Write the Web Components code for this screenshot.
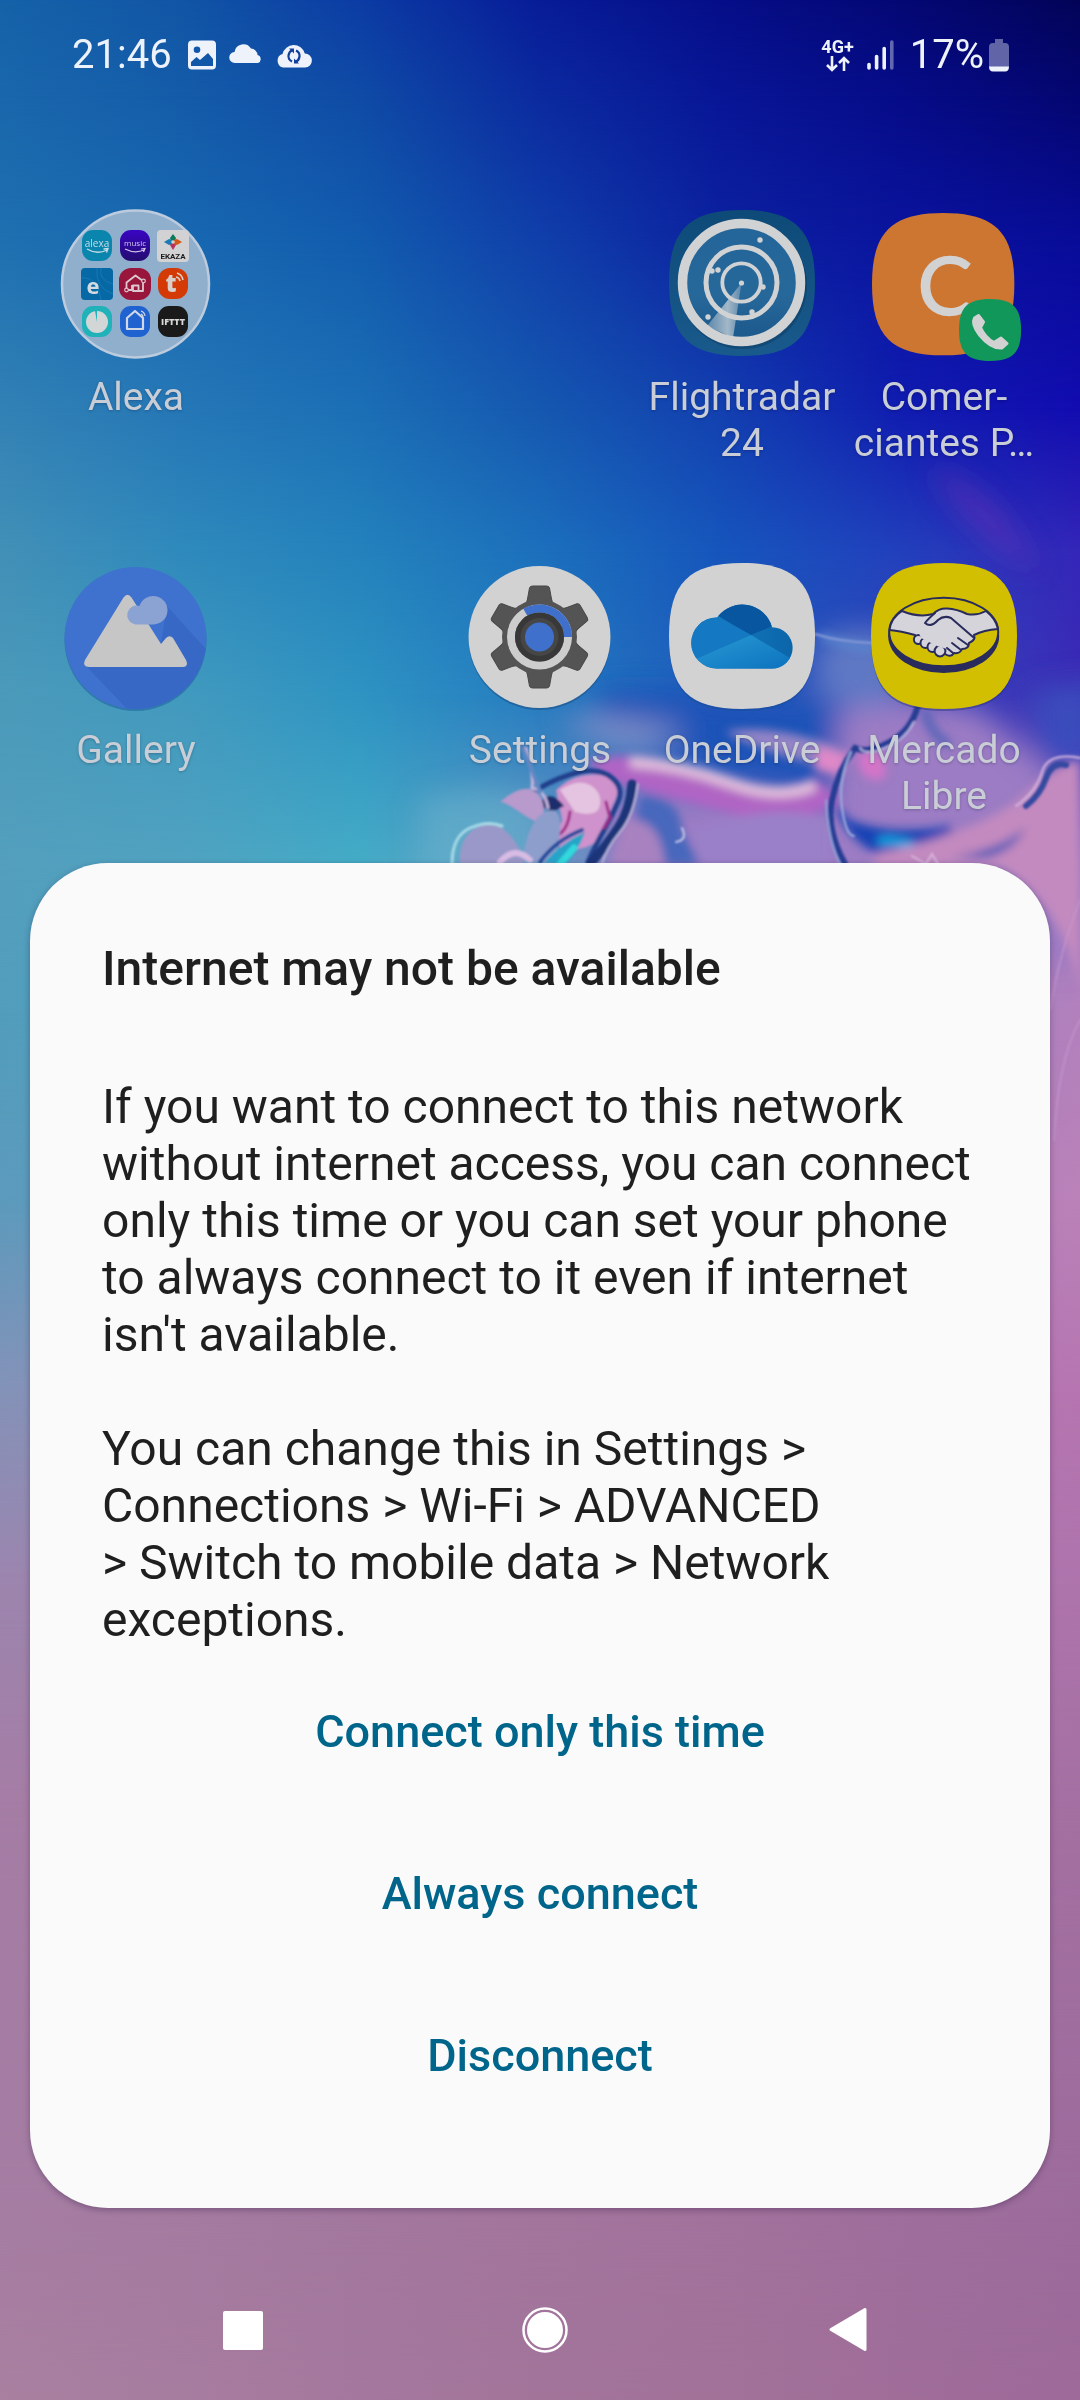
<!DOCTYPE html>
<html lang="en">
<head>
<meta charset="utf-8">
<meta name="viewport" content="width=device-width, initial-scale=1">
<title>Home screen</title>
<style>
  html, body { margin: 0; }
  body { font-family: Roboto, "Noto Sans", sans-serif; background: #a2739c; }
  svg text { user-select: none; }
</style>
</head>
<body>
<home-screen>
  <wall-paper slot="background"></wall-paper>
  <status-bar time="21:46" battery="17%" network="4G+"></status-bar>

  <app-grid>
    <app-tile column="1">
      <svg slot="icon" viewBox="0 0 146 146" aria-hidden="true">
        <defs>
          <linearGradient id="music" x1="0" y1="0" x2="0" y2="1"><stop offset="0" stop-color="#3a04c4"/><stop offset="1" stop-color="#240c70"/></linearGradient>
        </defs>
        <circle cx="72.500" cy="74" r="73.500" fill="#8fafcd" stroke="#bccbdd" stroke-width="2.500"/>
        <rect x="19" y="20" width="30" height="31" rx="11" fill="#0a86ae"/>
        <text x="34" y="37" font-family="Open Sans" font-size="10" fill="#c8dce6" text-anchor="middle">alexa</text>
        <path d="M24 39q10 6 20 1m-3.500-1l4.500-.5-1.500 4" fill="none" stroke="#c8dce6" stroke-width="1.300"/>
        <rect x="57" y="20" width="30" height="31" rx="11" fill="url(#music)"/>
        <text x="72" y="36" font-family="Open Sans" font-size="8" fill="#d0c8e8" text-anchor="middle">music</text>
        <path d="M62 39q10 5 19 1m-3-1l4-.5-1.500 3.500" fill="none" stroke="#d0c8e8" stroke-width="1.200"/>
        <rect x="94" y="20" width="32" height="32" rx="4" fill="#d2d2d4"/>
        <path d="M107 28l3-4 3 4-1 3h-4z" fill="#0a7a58"/>
        <path d="M107 35l3 5 3-5-1-3h-4z" fill="#b8305c"/>
        <path d="M106 29l-5 3 5 3 3-1v-4z" fill="#1c7ab4"/>
        <path d="M114 29l5 3-5 3-3-1v-4z" fill="#d4581c"/>
        <circle cx="110" cy="32" r="1.800" fill="#d2d2d4"/>
        <text x="110" y="49" font-family="Roboto" font-weight="700" font-size="8" fill="#1b1b1d" text-anchor="middle">EKAZA</text>
        <rect x="18" y="58" width="32" height="32" rx="4" fill="#0669a6"/>
        <path d="M38 58q-3 12 12 16M18 68q16-2 20 22M34 58q-2 20 16 26" fill="none" stroke="#1c80b8" stroke-width=".7"/>
        <text x="30" y="84" font-family="Open Sans" font-weight="700" font-size="22" fill="#d3dbe0" text-anchor="middle">e</text>
        <rect x="56" y="58" width="32" height="32" rx="12" fill="#98153c"/>
        <path d="M65 80H69V75M63.500 78V72.500L72.500 65.500 80 71V81H75.500V75.500H70V81H75" fill="none" stroke="#dcc8d0" stroke-width="1.800" stroke-linejoin="round"/>
        <circle cx="63.500" cy="80" r="1.800" fill="#98153c" stroke="#dcc8d0" stroke-width="1.200"/><circle cx="80.500" cy="71" r="1.800" fill="#98153c" stroke="#dcc8d0" stroke-width="1.200"/>
        <rect x="95" y="58" width="30" height="31" rx="12" fill="#d33a05"/>
        <text x="108" y="82" font-family="Open Sans" font-weight="800" font-size="24" fill="#d8cfcb" text-anchor="middle">t</text>
        <path d="M113 67a5 5 0 0 1 4 4M114 63a9 9 0 0 1 6 7" fill="none" stroke="#d8cfcb" stroke-width="1.600"/>
        <rect x="19" y="96" width="30" height="31" rx="11" fill="#20b2b9"/>
        <circle cx="34" cy="112" r="11" fill="#d2d6d6"/><path d="M32 101l2 11v-11z" fill="#20b2b9"/>
        <rect x="57" y="96" width="30" height="31" rx="11" fill="#1f62d0"/>
        <path d="M64 119v-11l8-7 8 7v11z" fill="none" stroke="#d0d8e4" stroke-width="2.200" stroke-linejoin="round"/>
        <path d="M78 104a3 3 0 0 1 2 3M78 101a6 6 0 0 1 4 5" fill="none" stroke="#d0d8e4" stroke-width="1.200"/>
        <rect x="95" y="96" width="30" height="31" rx="11" fill="#1a1a1a"/>
        <text x="110" y="115" font-family="Open Sans" font-weight="800" font-size="9" fill="#d8d8d8" text-anchor="middle">IFTTT</text>
      </svg>
      Alexa
    </app-tile>

    <app-tile column="4">
      <svg slot="icon" viewBox="0 0 146 146" aria-hidden="true">
        <defs>
          <linearGradient id="radar" x1="0" y1="0" x2="0" y2="1"><stop offset="0" stop-color="#24659a"/><stop offset=".6" stop-color="#27689a"/><stop offset="1" stop-color="#1b578a"/></linearGradient>
          <linearGradient id="tile" x1="0" y1="0" x2="0" y2="1"><stop offset="0" stop-color="#0d4a78"/><stop offset="1" stop-color="#195a8c"/></linearGradient>
          <linearGradient id="beam" x1="0" y1="0" x2="1" y2="0"><stop offset="0" stop-color="#5c87ab"/><stop offset=".6" stop-color="#a3b8c8"/><stop offset="1" stop-color="#5c87ab"/></linearGradient>
        </defs>
        <path d="M0 73C0 20 20 0 73 0S146 20 146 73 126 146 73 146 0 126 0 73Z" fill="url(#tile)"/>
        <circle cx="74" cy="75" r="64" fill="#0a2d50" opacity=".35"/>
        <circle cx="72.500" cy="72.500" r="59" fill="url(#radar)"/>
        <path d="M72.500 73L38 116 64 128Z" fill="url(#beam)"/>
        <g fill="none" stroke="#d0d2d4">
          <circle cx="72.500" cy="72.500" r="59" stroke-width="9.500"/>
          <circle cx="72.500" cy="72.500" r="35.500" stroke-width="5"/>
          <circle cx="72.500" cy="72.500" r="19.200" stroke-width="3.800"/>
        </g>
        <g fill="#d0d2d4">
          <circle cx="72.500" cy="73" r="2.600"/><circle cx="91" cy="30" r="2.700"/><circle cx="49" cy="60" r="2.700"/><circle cx="43" cy="61" r="2.700"/>
          <circle cx="94" cy="77" r="2.700"/><circle cx="83" cy="102" r="2.700"/><circle cx="39" cy="107" r="2.700"/>
        </g>
      </svg>
      Flightradar<br>24
    </app-tile>

    <app-tile column="5">
      <svg slot="icon" viewBox="0 0 146 146" aria-hidden="true">
        <path transform="translate(1 3) scale(.975)" d="M0 73C0 20 20 0 73 0S146 20 146 73 126 146 73 146 0 126 0 73Z" fill="#cd7632"/>
        <text x="74" y="105" font-family="Lato" font-size="82" fill="#d2d2d2" stroke="#d2d2d2" stroke-width="1.500" text-anchor="middle">C</text>
        <path transform="translate(88 89) scale(.425)" d="M0 73C0 20 20 0 73 0S146 20 146 73 126 146 73 146 0 126 0 73Z" fill="#12975a"/>
        <path d="M107.500 105.500L112.500 112 109.500 117.500Q114 127.500 123 132.500L130 128 136 133.500 131 138Q120 139 108.500 125 100 114 103.500 108Z" fill="#d2d2d2" stroke="#d2d2d2" stroke-width="3" stroke-linejoin="round"/>
      </svg>
      Comer-<br>ciantes P…
    </app-tile>

    <app-tile column="1">
      <svg slot="icon" viewBox="0 0 146 146" aria-hidden="true">
        <defs><clipPath id="disc"><circle cx="72.500" cy="75" r="71"/></clipPath></defs>
        <circle cx="72.500" cy="77" r="71" fill="#1a5a9c" opacity=".5"/>
        <circle cx="72.500" cy="75" r="71" fill="#3f72ce"/>
        <path clip-path="url(#disc)" d="M23 103L66 148 150 148 150 94 104 43 98 80 122 103Z" fill="#3768c6"/>
        <path d="M60.500 34.500q4-5.500 8 0L98 81l5-6q3.500-3.500 7 0l13 22q3 6.500-3 7H26q-7-.5-4-7z" fill="#c6c6c6"/>
        <path d="M72.500 61.500a9.500 9.500 0 1 1 4-18.500 14.300 14.300 0 1 1 14 18.500z" fill="#8ba3d2"/>
      </svg>
      Gallery
    </app-tile>

    <app-tile column="3">
      <svg slot="icon" viewBox="0 0 146 146" aria-hidden="true">
        <circle cx="72.500" cy="76" r="71" fill="#1a4c80" opacity=".5"/>
        <circle cx="72.500" cy="74" r="71" fill="#d2d2d2"/>
        <g transform="translate(72.500 74)">
          <g fill="#545454" stroke="#484848" stroke-width="1">
            <path id="tooth" d="M-19-30q6-2 7-8l2-11q.5-2 3-2H7q2.500 0 3 2l2 11q1 6 7 8z"/>
            <use href="#tooth" transform="rotate(60)"/><use href="#tooth" transform="rotate(120)"/><use href="#tooth" transform="rotate(180)"/><use href="#tooth" transform="rotate(240)"/><use href="#tooth" transform="rotate(300)"/>
          </g>
          <circle r="37.500" fill="#545454"/>
          <circle r="28.500" fill="none" stroke="#cdcdcd" stroke-width="8"/>
          <path d="M-14.200-24.700A28.500 28.500 0 0 1 28.500 0" fill="none" stroke="#3f70cc" stroke-width="8"/>
          <circle r="24.500" fill="#383838"/><circle r="19" fill="#464646"/>
          <circle r="14.500" fill="#3f70cc"/>
        </g>
      </svg>
      Settings
    </app-tile>

    <app-tile column="4">
      <svg slot="icon" viewBox="0 0 146 146" aria-hidden="true">
        <defs>
          <clipPath id="cloud"><path d="M47.500 105.500A25.500 25.500 0 1 1 48 54.500 31 31 0 0 1 103 64.200 20.500 20.500 0 1 1 103 105.500Z"/></clipPath>
          <linearGradient id="cloudBase" x1="0" y1="0" x2="1" y2="0"><stop offset="0" stop-color="#1a83c4"/><stop offset="1" stop-color="#0a63a8"/></linearGradient>
          <linearGradient id="cloudLight" x1="0" y1="0" x2="1" y2="1"><stop offset="0" stop-color="#2a9bd4"/><stop offset="1" stop-color="#0a70be"/></linearGradient>
        </defs>
        <path d="M0 75C0 22 20 2 73 2S146 22 146 75 126 148 73 148 0 128 0 75Z" fill="#184c98" opacity=".5"/>
        <path d="M0 73C0 20 20 0 73 0S146 20 146 73 126 146 73 146 0 126 0 73Z" fill="#d2d2d2"/>
        <g clip-path="url(#cloud)">
          <path d="M15 35h115v75H15z" fill="url(#cloudBase)"/>
          <path d="M44 50L82 72 106 62 100 36H44z" fill="#0856a0"/>
          <path d="M20 50L48 54 82 72 20 100z" fill="#1479c2"/>
          <path d="M20 99L82 72 126 98V108H20z" fill="url(#cloudLight)"/>
        </g>
      </svg>
      OneDrive
    </app-tile>

    <app-tile column="5">
      <svg slot="icon" viewBox="0 0 146 146" aria-hidden="true">
        <path d="M0 75C0 22 20 2 73 2S146 22 146 75 126 148 73 148 0 128 0 75Z" fill="#1e2a78" opacity=".4"/>
        <path d="M0 73C0 20 20 0 73 0S146 20 146 73 126 146 73 146 0 126 0 73Z" fill="#d2bf02"/>
        <ellipse cx="72.700" cy="73" rx="55.500" ry="37" fill="#282b5c"/>
        <ellipse cx="72.700" cy="69" rx="54.500" ry="34.300" fill="#d2bf02" stroke="#282b5c" stroke-width="2"/>
        <g stroke="#282b5c" stroke-width="2" stroke-linejoin="round" stroke-linecap="round">
          <path d="M31 48Q48 55 62 51 68 45 76 45.500 86 46 96 51 106 53 115 48 125 56 127 66 113 67 103 72 105 77 98 80 98 86 91 86 89 91 83 90 80 95 74 91L46 78 44 72Q30 68 18.500 67 20 55 31 48Z" fill="#d4d4da"/>
          <g fill="#d4d4da"><circle cx="47.500" cy="76.500" r="4.600"/><circle cx="54.500" cy="80" r="5"/><circle cx="61.500" cy="84" r="5"/><circle cx="69" cy="88" r="5.400"/></g>
          <path d="M47 68L70 72 76 86 66 83 50 75Z" fill="#d4d4da" stroke="none"/>
          <path d="M64 50Q57 56 54 60 60 65 67 57 73 52 80 55L102 74M87 75l10 7M81 80l9 7M76 85l6 5" fill="none"/>
        </g>
      </svg>
      Mercado<br>Libre
    </app-tile>
  </app-grid>

  <alert-sheet>
    <span slot="title">Internet may not be available</span>
    <p>If you want to connect to this network without internet access, you can connect only this time or you can set your phone to always connect to it even if internet isn't available.</p>
    <p>You can change this in Settings &gt; Connections &gt; Wi-Fi &gt; ADVANCED &gt;&nbsp;Switch to mobile data &gt; Network exceptions.</p>
    <sheet-action slot="actions">Connect only this time</sheet-action>
    <sheet-action slot="actions">Always connect</sheet-action>
    <sheet-action slot="actions">Disconnect</sheet-action>
  </alert-sheet>

  <nav-bar></nav-bar>
</home-screen>

<script>
const define = (name, html, setup) => {
  const template = document.createElement('template');
  template.innerHTML = html;
  customElements.define(name, class extends HTMLElement {
    connectedCallback() {
      if (this.shadowRoot) return;
      const root = this.attachShadow({ mode: 'open' });
      root.append(template.content.cloneNode(true));
      if (setup) setup(this, root);
    }
  });
};

define('home-screen', `
  <style>
    :host { display: grid; min-height: 100vh; overflow: hidden; }
    ::slotted([slot="background"]), main { grid-area: 1 / 1; min-width: 0; }
    main { display: flex; flex-direction: column; z-index: 1; }
  </style>
  <slot name="background"></slot>
  <main><slot></slot></main>`);

/* Colour mesh: every row is a horizontal gradient that fades in from the row above it. */
const mesh = [
  [0,   '#1562a8 #1156a6 #0c3ca4 #081c98 #060e88 #040874 #030458'],
  [4,   '#1a67ac #145ca9 #0f4ba6 #0b2a9f #081696 #060c88 #040670'],
  [10,  '#1e70b0 #1868b1 #125cae #103faa #0c22a0 #0a149e #080c98'],
  [17,  '#3281b5 #2577b6 #1b6fb5 #1558b0 #1340b0 #101cb0 #120cb0'],
  [23,  '#4290b7 #2f8abc #2482bc #1c70bc #1656bc #2240bc #3426b8'],
  [29,  '#4b9aba #429abe #2e94c2 #267cc0 #1f5cbc #3a4cbc #3c2cb6'],
  [36,  '#539fbd #50a2c0 #44acc6 #6a98c4 #8078c4 #7a6cc0 #9c76c0'],
  [42,  '#529dbc #50a2c0 #60a8c4 #8090c4 #9080c4 #a080c0 #b281bd'],
  [50,  '#5c9abc #60a0c0 #70a0c0 #9090c0 #a084be #b07cb8 #ba82b8'],
  [58,  '#8492b8 #8c90b8 #9090b8 #9888b4 #a480b0 #b078b0 #b675b0'],
  [66,  '#9c85ae #9c85ae #a080ac #a47cac #a878a8 #ac76aa #ae74ac'],
  [75,  '#a57da5 #a57da5 #a57ba5 #a478a2 #a476a2 #a472a2 #a470a2'],
  [92,  '#a57da3 #a57ba1 #a3789e #a3759d #a2729c #9f6e9c #9c6c9c'],
  [100, '#a9809f #a67c9f #a4789e #a2749a #a27299 #9f6d98 #9d6a99']
];

define('wall-paper', `
  <style>
    :host { display: grid; background: #a2739c; }
    .row, svg { grid-area: 1 / 1; width: 100%; height: 100%; min-height: 0; }
    svg { contain: size; z-index: 1; }
  </style>
  <svg viewBox="0 0 1080 2400" preserveAspectRatio="xMidYMid slice" aria-hidden="true">
    <defs>
      <filter id="b14" x="-50%" y="-50%" width="200%" height="200%"><feGaussianBlur stdDeviation="14"/></filter>
      <filter id="b5" x="-50%" y="-50%" width="200%" height="200%"><feGaussianBlur stdDeviation="5"/></filter>
      <filter id="b1" x="-20%" y="-20%" width="140%" height="140%"><feGaussianBlur stdDeviation="1"/></filter>
    </defs>
    <g filter="url(#b14)">
      <path d="M930 465Q985 490 1005 520T1040 570Q1010 560 975 525T930 465Z" fill="#7a30b4" opacity=".5"/>
      <path d="M600 690Q700 690 830 700L840 790Q760 790 690 760T600 720Z" fill="#1f52b8"/>
      <path d="M560 718Q620 708 690 730L640 752Q590 745 560 718Z" fill="#8a94c8" opacity=".8"/>
      <path d="M840 710Q900 690 980 712L1060 780 1080 960H620L600 800Q700 790 830 815Z" fill="#9c7cc4"/>
      <path d="M1030 690L1100 680V768L1040 765Z" fill="#3a4cbc"/>
      <path d="M820 640Q860 620 900 640V700Q850 720 815 690Z" fill="#5f78c4"/>
      <path d="M420 800Q480 780 540 800V880H420Z" fill="#68b0cc" opacity=".6"/>
    </g>
    <g filter="url(#b5)">
      <path d="M725 732Q770 722 840 748V768Q780 760 725 732Z" fill="#9484c6"/>
      <path d="M585 762Q640 745 700 772 760 800 815 778L840 800Q800 828 760 820T610 782Z" fill="#b065c4"/>
      <path d="M630 762Q680 765 730 783T815 785" fill="none" stroke="#e2c0dc" stroke-width="11"/>
      <path d="M640 795Q680 795 682 830L700 865H625Z" fill="#4668bc"/>
      <path d="M625 820Q660 815 665 865H610Z" fill="#a882c0"/>
      <path d="M690 830Q780 800 830 820V865H700Z" fill="#9a80c8"/>
      <path d="M820 745Q836 755 850 752L840 775 815 770Z" fill="#e088c8"/>
      <path d="M857 755Q880 745 885 765T868 778Q858 772 857 755Z" fill="#d474c8"/>
      <path d="M832 800Q845 840 880 855L960 852 950 826Q890 836 850 820Z" fill="#1442b4"/>
      <path d="M878 842Q890 838 914 846" fill="none" stroke="#12a8e4" stroke-width="8"/>
      <path d="M945 835Q1000 818 1030 790T1080 760V990Q1060 900 1000 866H870L880 852Q920 845 945 835Z" fill="#c38abf"/>
      <path d="M950 858Q1000 850 1025 828 1015 850 985 858Z" fill="#3a55b8"/>
      <path d="M925 710Q930 735 950 745" fill="none" stroke="#5664b8" stroke-width="9"/>
      <path d="M820 636Q845 646 875 648" fill="none" stroke="#5c8cd0" stroke-width="6"/>
    </g>
    <g filter="url(#b1)" fill="none" stroke-linecap="round">
      <path d="M815 634Q840 642 872 643" stroke="#8a9cd8" stroke-width="2"/>
      <path d="M556 790Q575 772 600 775T615 800 600 835 572 850 562 820Z" fill="#cf92cc"/>
      <path d="M560 790Q578 778 590 785T600 805 575 812Z" fill="#e4c4e0"/>
      <path d="M536 790Q560 776 580 772T612 778 618 802 604 830 588 862" stroke="#20408c" stroke-width="5"/>
      <path d="M632 784Q630 810 618 828T590 864" stroke="#1a3478" stroke-width="9"/>
      <path d="M638 784Q634 815 620 832T602 864" stroke="#b8b4dc" stroke-width="2"/>
      <path d="M542 800Q552 790 564 806L552 812Q545 808 540 806Z" fill="#1c2f6c"/>
      <path d="M606 802l4 16-6 10M570 812q-2 16-10 22" stroke="#a02888" stroke-width="3"/>
      <path d="M500 802Q520 785 532 790T544 812 524 815 500 802Z" fill="#b89acc"/>
      <path d="M526 748Q534 775 532 788 545 790 548 808" stroke="#c8b4dc" stroke-width="3"/>
      <path d="M522 746Q532 770 540 792" stroke="#6088c4" stroke-width="4"/>
      <path d="M522 862Q528 820 545 812T560 832 545 862Z" fill="#8d9ecc"/>
      <path d="M545 862Q562 842 585 832 580 848 566 864Z" fill="#28a4c8"/>
      <path d="M540 862Q556 840 582 830" stroke="#1c4a9c" stroke-width="4"/>
      <path d="M560 864l14-16" stroke="#30d8dc" stroke-width="7"/>
      <path d="M460 864Q458 835 480 826T520 850L524 864Z" fill="#9a98c8"/>
      <path d="M452 864Q452 836 470 828T502 826" stroke="#a8dce8" stroke-width="3"/>
      <path d="M500 862Q515 845 530 860" stroke="#d8bce4" stroke-width="6"/>
      <path d="M682 828Q688 840 676 842" stroke="#c8c8e8" stroke-width="2"/>
      <path d="M918 705Q912 730 890 742T855 748Q838 770 832 800T845 864" stroke="#283c94" stroke-width="6"/>
      <path d="M914 722Q905 740 885 748T860 748" stroke="#b4b4e0" stroke-width="2"/>
      <path d="M851 752Q838 780 842 808T854 836" stroke="#9cb0e0" stroke-width="2"/>
      <path d="M826 800Q828 840 840 864" stroke="#90a4dc" stroke-width="2"/>
      <path d="M1026 806Q1040 795 1046 778T1066 765" stroke="#3448a0" stroke-width="6"/>
      <path d="M1016 806Q1036 792 1042 772T1080 758" stroke="#d4b8e0" stroke-width="2"/>
      <path d="M912 856l14 8 6-10 6 10" stroke="#d8b4dc" stroke-width="2"/>
      <path d="M1080 900Q1060 950 1050 1010M1080 1020Q1058 1060 1054 1140" stroke="#c89ad0" stroke-width="2" opacity=".6"/>
    </g>
  </svg>`, (host, root) => {
    const art = root.querySelector('svg');
    mesh.forEach(([stop, colours], i) => {
      const row = document.createElement('div');
      row.className = 'row';
      row.style.background = `linear-gradient(90deg, ${colours.split(' ').join(', ')})`;
      if (i) {
        row.style.maskImage = `linear-gradient(180deg, transparent ${mesh[i - 1][0]}%, #000 ${stop}%)`;
      }
      art.before(row);
    });
  });

define('status-bar', `
  <style>
    :host { display: flex; align-items: center; justify-content: space-between; padding: 31px 71px 0 72px; color: #eef2fb; font-size: 40px; line-height: 48px; }
    .side { display: flex; align-items: center; }
    .left { gap: 13px; }
    .left .time { margin-right: 3px; }
    svg { display: block; flex: none; }
    .network { display: flex; flex-direction: column; align-items: center; font-size: 18px; font-weight: 700; line-height: 18px; margin-right: 12px; }
    .level { margin-left: 16px; margin-right: 5px; }
  </style>
  <div class="side left">
    <span class="time"></span>
    <svg width="28" height="32" viewBox="0 0 28 32" aria-hidden="true"><path fill="currentColor" fill-rule="evenodd" d="M4 1.500h20a4 4 0 0 1 4 4v21a4 4 0 0 1-4 4H4a4 4 0 0 1-4-4v-21a4 4 0 0 1 4-4zM9 7.500a3.300 3.300 0 1 0 0 6.600 3.300 3.300 0 0 0 0-6.600zM3 27h22v-7l-5-6-8 7-3.500-3L3 23z"/></svg>
    <svg width="34" height="32" viewBox="0 0 34 32" aria-hidden="true"><path fill="currentColor" d="M6 24a5.500 5.500 0 0 1-.5-11 9 9 0 0 1 16.500-3.500A7 7 0 0 1 28.500 16 4.200 4.200 0 0 1 29 24z"/></svg>
    <svg width="36" height="32" viewBox="0 0 36 32" aria-hidden="true"><path fill="currentColor" d="M7 28.500A7 7 0 0 1 6.500 15 11.500 11.500 0 0 1 28.800 14.500 7 7 0 0 1 29 28.500z"/><g fill="none" stroke="#123f9c" stroke-width="2.200"><path d="M16 22.500q-4-2-3.500-6t4-5.500M20 11.500q4 2 3.500 6t-4 5.500"/></g><path fill="#123f9c" d="M13 9.500h5v5zM23 24.500h-5v-5z"/></svg>
  </div>
  <div class="side">
    <span class="network"><span class="type"></span>
      <svg width="24" height="16" viewBox="0 0 24 16" aria-hidden="true" fill="none" stroke="currentColor" stroke-width="2.600"><path d="M6 0v14M1 9l5 5 5-5M18 15V2M13 7l5-5 5 5"/></svg>
    </span>
    <svg width="28" height="32" viewBox="0 0 28 32" aria-hidden="true" stroke="currentColor" stroke-width="3.600" stroke-linecap="round"><path d="M3 25.500V29M10.600 17.500V29M18.200 9.500V29"/><path d="M25.800 3V29" opacity=".4"/></svg>
    <span class="level"></span>
    <svg width="20" height="34" viewBox="0 0 20 34" aria-hidden="true"><path fill="currentColor" opacity=".4" d="M6 1h8v4h2q4 0 4 4v20H0V9q0-4 4-4h2z"/><path fill="currentColor" d="M0 28.500h20q0 5-4 5H4q-4 0-4-5z"/></svg>
  </div>`, (host, root) => {
    root.querySelector('.time').textContent = host.getAttribute('time');
    root.querySelector('.level').textContent = host.getAttribute('battery');
    root.querySelector('.type').textContent = host.getAttribute('network');
  });

define('app-grid', `
  <style>
    :host { display: grid; grid-template-columns: repeat(5, minmax(0, 1fr)); row-gap: 97px; padding: 131px 35px 44px; }
  </style>
  <slot></slot>`);

define('app-tile', `
  <style>
    :host { display: block; }
    button { display: flex; flex-direction: column; align-items: center; gap: 18px; width: 100%; padding: 0; border: 0; background: none; font: inherit; font-size: 39px; line-height: 46px; color: #c9ced6; white-space: nowrap; cursor: pointer; }
    .label { text-shadow: 0 1px 3px rgba(0, 0, 40, .25); }
    ::slotted(svg) { display: block; width: 146px; height: 146px; overflow: visible; }
  </style>
  <button type="button"><slot name="icon"></slot><span class="label"><slot></slot></span></button>`, host => {
    host.style.gridColumn = host.getAttribute('column');
  });

define('alert-sheet', `
  <style>
    :host { display: block; margin: auto 30px 0; padding: 78px 72px 92px; border-radius: 78px; background: #fafafa; color: #1f1f1f; box-shadow: 0 2px 6px rgba(40, 20, 60, .35); }
    h1 { margin: 0; font-size: 48px; font-weight: 500; line-height: 56px; }
    .message { display: flex; flex-direction: column; gap: 57px; margin: 81px 0 24px; font-size: 48px; line-height: 57px; }
    ::slotted(p) { margin: 0; }
    .actions { display: flex; flex-direction: column; gap: 42px; }
  </style>
  <section role="alertdialog" aria-labelledby="title">
    <h1 id="title"><slot name="title"></slot></h1>
    <div class="message"><slot></slot></div>
    <div class="actions"><slot name="actions"></slot></div>
  </section>`);

define('sheet-action', `
  <style>
    :host { display: block; }
    button { display: block; width: 100%; padding: 32px 0; border: 0; background: none; font: inherit; font-size: 45px; font-weight: 500; line-height: 56px; color: #00658b; cursor: pointer; }
  </style>
  <button type="button"><slot></slot></button>`);

define('nav-bar', `
  <style>
    :host { display: block; padding: 52px 82px 0 92px; }
    nav { display: grid; grid-template-columns: repeat(3, 1fr); }
    button { display: flex; justify-content: center; padding: 46px 0; border: 0; background: none; color: #fff; cursor: pointer; }
    svg { display: block; }
  </style>
  <nav aria-label="System navigation">
    <button type="button" aria-label="Recent apps"><svg width="48" height="48" viewBox="0 0 48 48"><rect x="4" y="5" width="40" height="39" rx="2" fill="currentColor"/></svg></button>
    <button type="button" aria-label="Home"><svg width="48" height="48" viewBox="0 0 48 48"><circle cx="24" cy="24" r="21.500" fill="none" stroke="currentColor" stroke-width="2.500"/><circle cx="24" cy="24" r="18" fill="currentColor"/></svg></button>
    <button type="button" aria-label="Back"><svg width="48" height="48" viewBox="0 0 48 48"><path d="M8 23.500L42 3.500V43.500Z" fill="currentColor" stroke="currentColor" stroke-width="3" stroke-linejoin="round"/></svg></button>
  </nav>`);
</script>
</body>
</html>
